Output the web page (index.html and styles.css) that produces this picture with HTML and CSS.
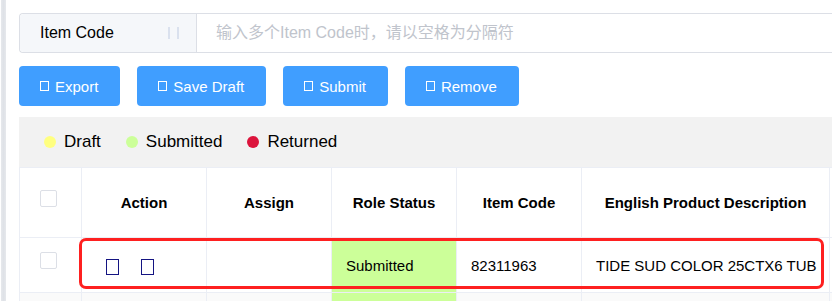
FILE: index.html
```html
<!DOCTYPE html>
<html lang="zh">
<head>
<meta charset="utf-8">
<title>Item list</title>
<link rel="stylesheet" href="styles.css">
</head>
<body>
<div class="page">
  <div class="rail"></div>
  <main class="main">
    <div class="search">
      <div class="prepend">
        <span class="prepend-label">Item Code</span>
        <svg class="caret" width="11" height="12" viewBox="0 0 11 12"><path d="M1 0V12M10 0V12" stroke="#c9d3e6" stroke-width="1.2"/></svg>
      </div>
      <input class="search-input" type="text" placeholder="输入多个Item Code时，请以空格为分隔符">
    </div>

    <div class="toolbar">
      <button class="btn"><span class="btn-icon"></span>Export</button>
      <button class="btn"><span class="btn-icon"></span>Save Draft</button>
      <button class="btn"><span class="btn-icon"></span>Submit</button>
      <button class="btn"><span class="btn-icon"></span>Remove</button>
    </div>

    <div class="legend">
      <span class="legend-item"><span class="dot dot-draft"></span>Draft</span>
      <span class="legend-item"><span class="dot dot-submitted"></span>Submitted</span>
      <span class="legend-item"><span class="dot dot-returned"></span>Returned</span>
    </div>

    <div class="table-wrap">
      <table class="grid">
        <colgroup>
          <col class="c-check"><col class="c-std"><col class="c-std"><col class="c-std"><col class="c-std"><col class="c-desc"><col class="c-more">
        </colgroup>
        <thead>
          <tr>
            <th class="cell-check"><span class="checkbox"></span></th>
            <th>Action</th>
            <th>Assign</th>
            <th>Role Status</th>
            <th>Item Code</th>
            <th>English Product Description</th>
            <th></th>
          </tr>
        </thead>
        <tbody>
          <tr class="row">
            <td class="cell-check"><span class="checkbox"></span></td>
            <td class="cell-action"><span class="actions"><span class="act-icon"></span><span class="act-icon"></span></span></td>
            <td></td>
            <td class="status-submitted">Submitted</td>
            <td>82311963</td>
            <td>TIDE SUD COLOR 25CTX6 TUB</td>
            <td></td>
          </tr>
          <tr class="row row-alt">
            <td class="cell-check"></td>
            <td></td>
            <td></td>
            <td class="status-submitted"></td>
            <td></td>
            <td></td>
            <td></td>
          </tr>
        </tbody>
      </table>
      <div class="highlight"></div>
    </div>
  </main>
</div>
</body>
</html>
```

FILE: styles.css
```css
html, body {
  margin: 0;
  padding: 0;
  background: #fff;
  overflow: hidden;
}

body {
  font-family: "Liberation Sans", Arial, "Noto Sans CJK SC", sans-serif;
  color: #000;
}

.page {
  display: flex;
  height: 301px;
}

.rail {
  flex: 0 0 5px;
  margin-left: 1px;
  background: linear-gradient(90deg, #e6e8ec, #dfe2e7 50%, #e6e8ec);
}

.main {
  flex: 1;
  min-width: 0;
  padding: 13px 0 0 13px;
  overflow: hidden;
}

/* search */
.search {
  display: flex;
  width: 1100px;
  height: 40px;
  box-sizing: border-box;
  border: 1px solid #dcdfe6;
  border-right: none;
  border-radius: 4px 0 0 4px;
}

.prepend {
  flex: 0 0 177px;
  box-sizing: border-box;
  display: flex;
  align-items: center;
  justify-content: space-between;
  padding: 0 17px 0 20px;
  background: #f5f7fa;
  border-right: 1px solid #dcdfe6;
  border-radius: 4px 0 0 4px;
  font-size: 16px;
  color: #000;
}

.caret {
  display: block;
}

.search-input {
  flex: 1;
  border: none;
  outline: none;
  padding: 0 0 0 19px;
  font-family: "Liberation Sans", Arial, "Noto Sans CJK SC", sans-serif;
  font-size: 16px;
  color: #000;
  background: #fff;
}

.search-input::placeholder {
  color: #c0c4cc;
}

/* toolbar */
.toolbar {
  display: flex;
  gap: 17px;
  margin-top: 13px;
}

.btn {
  display: flex;
  align-items: center;
  gap: 6px;
  height: 40px;
  padding: 0 22px 0 21px;
  border: none;
  border-radius: 4px;
  background: #409eff;
  color: #fff;
  font-family: "Liberation Sans", Arial, sans-serif;
  font-size: 15px;
  cursor: pointer;
}

.btn-icon {
  width: 9px;
  height: 10px;
  box-sizing: border-box;
  border: 1px solid #fff;
}

/* legend */
.legend {
  display: flex;
  align-items: center;
  gap: 25px;
  width: 1100px;
  height: 50px;
  margin-top: 11px;
  padding-left: 25px;
  box-sizing: border-box;
  background: #f2f2f2;
  font-size: 17px;
}

.legend-item {
  display: flex;
  align-items: center;
  gap: 8px;
}

.dot {
  width: 12px;
  height: 12px;
  border-radius: 50%;
}

.dot-draft { background: #ffff80; }
.dot-submitted { background: #ccff99; }
.dot-returned { background: #dc143c; }

/* table */
.table-wrap {
  position: relative;
  width: 1100px;
}

.grid {
  border-collapse: collapse;
  table-layout: fixed;
  width: 1010px;
  font-size: 15px;
}

.c-check { width: 62px; }
.c-std { width: 125px; }
.c-desc { width: 248px; }
.c-more { width: 200px; }

.grid th,
.grid td {
  border: 1px solid #ebeef5;
  padding: 0 14px;
  white-space: nowrap;
  overflow: hidden;
}

.grid th {
  height: 69px;
  font-weight: bold;
  text-align: center;
  color: #000;
}

.grid td {
  height: 54px;
  text-align: left;
}

.grid th.cell-check,
.grid td.cell-check {
  padding: 0 0 0 20px;
  text-align: left;
}

.checkbox {
  display: block;
  width: 17px;
  height: 17px;
  box-sizing: border-box;
  border: 1px solid #dcdfe6;
  border-radius: 2px;
  background: #fff;
  margin-bottom: 9px;
}

.grid td.cell-action {
  padding-left: 24px;
}

.actions {
  display: flex;
  gap: 22px;
  margin-top: 4px;
}

.act-icon {
  width: 13px;
  height: 16px;
  box-sizing: border-box;
  border: 1px solid #141482;
  border-left-width: 1.5px;
}

.status-submitted {
  background: #ccff99;
}

.row-alt td {
  background: #fafafa;
}

.row-alt td.status-submitted {
  background: #ccff99;
}

.highlight {
  position: absolute;
  left: 60px;
  top: 71px;
  width: 745px;
  height: 51px;
  box-sizing: border-box;
  border: 3px solid #fe2020;
  border-radius: 7px;
  pointer-events: none;
}
```
